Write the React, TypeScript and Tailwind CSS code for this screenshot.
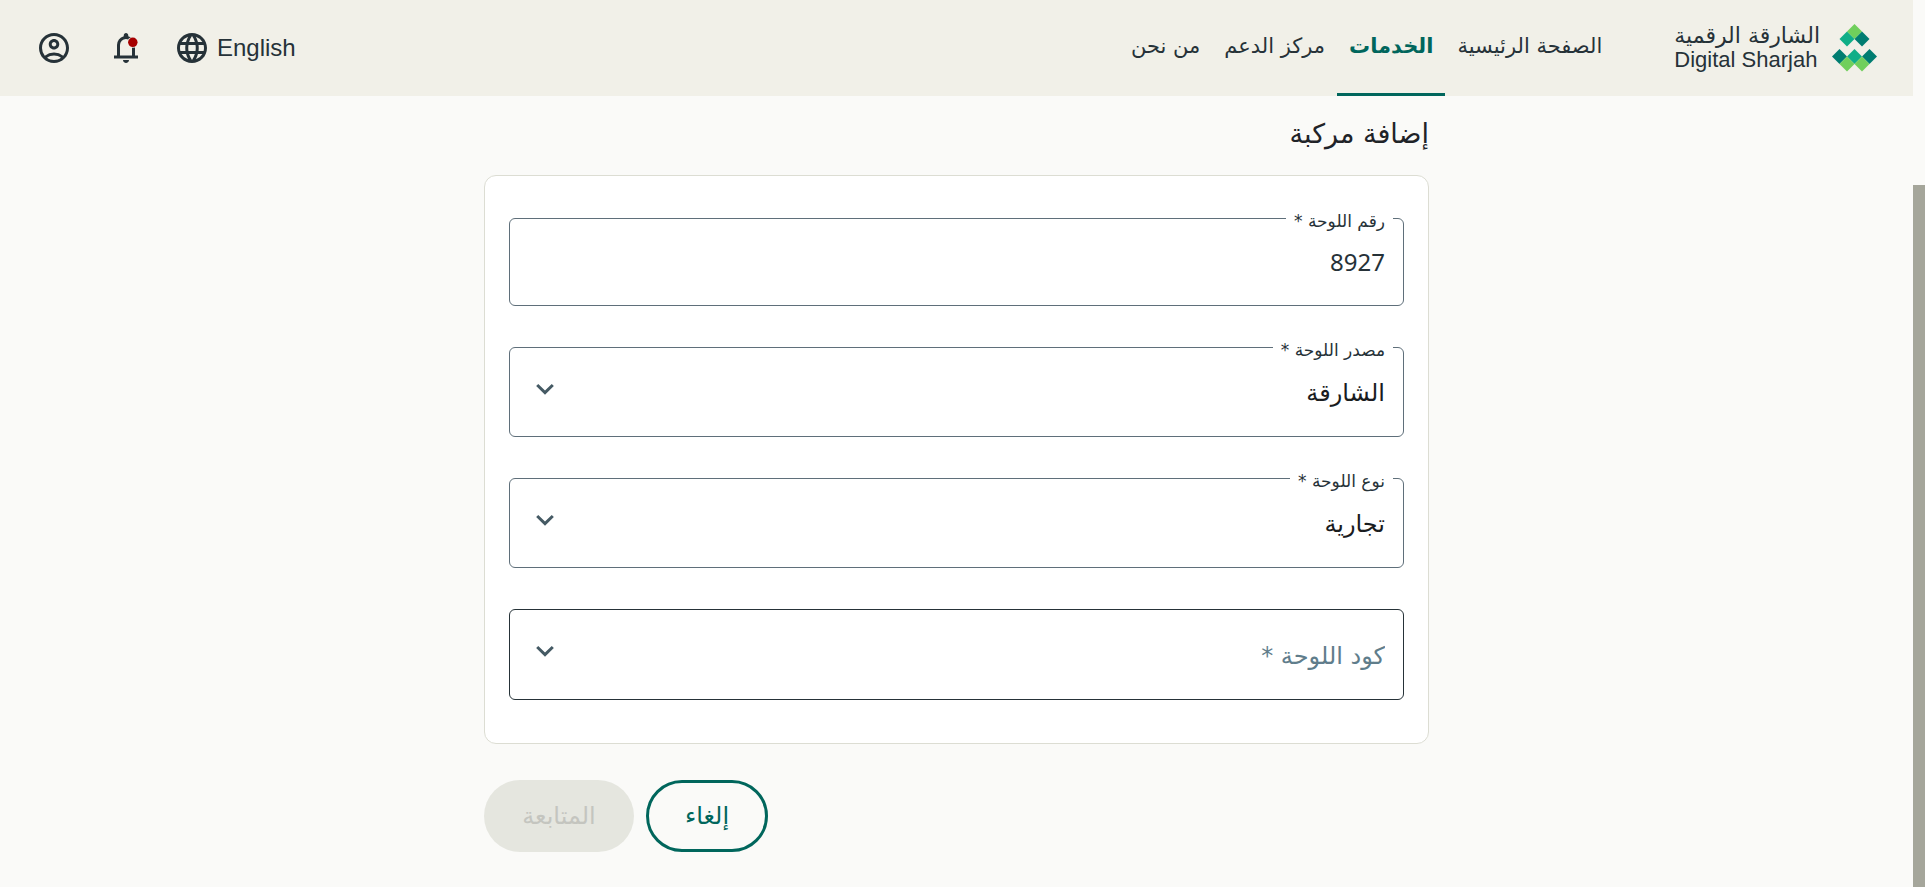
import { type ReactNode } from "react";
import { MdLanguage, MdOutlineAccountCircle } from "react-icons/md";

const navItems = [
  { label: "الصفحة الرئيسية", active: false },
  { label: "الخدمات", active: true },
  { label: "مركز الدعم", active: false },
  { label: "من نحن", active: false },
];

function LogoMark() {
  return (
    <svg viewBox="0 0 45 48" className="h-12 w-[45px]" aria-hidden="true">
      <path d="M22.5 0L30 7.5L22.5 15L15 7.5Z" fill="#70cf5c" />
      <path d="M15 7.5L22.5 15L15 22.5L7.5 15Z" fill="#0fae87" />
      <path d="M30 7.5L37.5 15L30 22.5L22.5 15Z" fill="#007d71" />
      <path d="M7.5 25L15 32.5L7.5 40L0 32.5Z" fill="#007d71" />
      <path d="M22.5 25L30 32.5L22.5 40L15 32.5Z" fill="#0fae87" />
      <path d="M37.5 25L45 32.5L37.5 40L30 32.5Z" fill="#007d71" />
      <path d="M15 32.5L22.5 40L15 47.5L7.5 40Z" fill="#70cf5c" />
      <path d="M30 32.5L37.5 40L30 47.5L22.5 40Z" fill="#70cf5c" />
    </svg>
  );
}

function BellIcon() {
  return (
    <svg viewBox="0 -960 960 960" className="size-9" aria-hidden="true">
      <path
        fill="currentColor"
        d="M160-200v-80h80v-280q0-83 50-147.5T420-792v-28q0-25 17.5-42.5T480-880q25 0 42.5 17.5T540-820v28q80 20 130 84.5T720-560v280h80v80H160Zm320 120q-33 0-56.5-23.5T400-160h160q0 33-23.5 56.5T480-80ZM320-280h320v-280q0-66-47-113t-113-47q-66 0-113 47t-47 113v280Z"
      />
      <circle cx="662" cy="-632" r="146" fill="#f1f0e8" />
      <circle cx="662" cy="-632" r="126" fill="#a60000" />
    </svg>
  );
}

function Chevron() {
  return (
    <svg viewBox="0 0 18 12" className="pointer-events-none absolute top-9 left-[27px] h-3 w-[18px]" fill="none" stroke="#455a64" strokeWidth="3" aria-hidden="true">
      <path d="M1.2 2L9 9.6L16.8 2" />
    </svg>
  );
}

function Field({ id, label, children }: { id: string; label: string; children: ReactNode }) {
  return (
    <div className="relative">
      <label htmlFor={id} className="absolute -top-[9px] right-[11px] bg-white px-2 text-[17px] leading-6 text-[#263238]">
        {label}
      </label>
      {children}
    </div>
  );
}

function SelectField({ id, label, value }: { id: string; label: string; value: string }) {
  return (
    <Field id={id} label={label}>
      <select id={id} className="block h-[90px] w-full appearance-none rounded-md border border-[#5f6f7a] bg-white px-[18px] pt-0.5 text-2xl text-[#1a1c1e]">
        <option>{value}</option>
      </select>
      <Chevron />
    </Field>
  );
}

export default function App() {
  return (
    <div dir="rtl" className="flex min-h-screen bg-[#fafaf8] font-['DejaVu_Sans',sans-serif] text-[#263238]">
      <div className="flex w-3 shrink-0 flex-col pt-[185px]">
        <div className="flex-1 bg-[#a5a69b]" />
      </div>
      <div className="min-w-0 flex-1">
        <header className="flex h-24 items-center justify-between bg-[#f1f0e8] px-9">
          <div className="flex h-full items-center gap-[60px]">
            <a href="#home" className="flex items-center gap-3">
              <LogoMark />
              <span className="flex flex-col">
                <span className="text-[22px] leading-6">الشارقة الرقمية</span>
                <span dir="ltr" className="font-['Liberation_Sans',sans-serif] text-[22px] leading-6">Digital Sharjah</span>
              </span>
            </a>
            <nav className="flex h-full">
              {navItems.map((item) => (
                <a
                  key={item.label}
                  href="#nav"
                  aria-current={item.active ? "page" : undefined}
                  className={
                    item.active
                      ? "flex items-center border-b-[3px] border-[#00665c] px-3 text-[21px] font-bold text-[#00665c]"
                      : "flex items-center px-3 pb-[3px] text-[21px]"
                  }
                >
                  {item.label}
                </a>
              ))}
            </nav>
          </div>
          <div className="flex items-center gap-[30px]">
            <button type="button" dir="ltr" className="flex items-center gap-[7px]">
              <MdLanguage className="size-9" aria-hidden="true" />
              <span className="font-['Liberation_Sans',sans-serif] text-2xl">English</span>
            </button>
            <div className="flex items-center gap-9">
              <button type="button" aria-label="الإشعارات"><BellIcon /></button>
              <button type="button" aria-label="الحساب"><MdOutlineAccountCircle className="size-9" /></button>
            </div>
          </div>
        </header>
        <main className="mx-auto max-w-[945px] pt-5">
          <h1 className="text-[27px] leading-9 font-medium text-[#1f2328]">إضافة مركبة</h1>
          <form className="mt-[23px]">
            <div className="flex flex-col gap-[41px] rounded-xl border border-[#dcddd3] bg-white px-6 pt-[42px] pb-[43px]">
              <Field id="plate-number" label="رقم اللوحة *">
                <input id="plate-number" defaultValue="8927" className="block h-[88px] w-full rounded-md border border-[#5f6f7a] bg-white px-[18px] pb-0.5 font-['Noto_Sans',sans-serif] text-2xl text-[#263238]" />
              </Field>
              <SelectField id="plate-source" label="مصدر اللوحة *" value="الشارقة" />
              <SelectField id="plate-kind" label="نوع اللوحة *" value="تجارية" />
              <div className="relative">
                <select aria-label="كود اللوحة" className="block h-[91px] w-full appearance-none rounded-md border border-[#263238] bg-white px-[18px] pt-0.5 text-2xl text-[#607d8b]">
                  <option>كود اللوحة *</option>
                </select>
                <Chevron />
              </div>
            </div>
            <div className="mt-9 flex justify-end gap-3">
              <button type="button" className="h-[72px] min-w-[122px] rounded-full border-[3px] border-[#00665c] px-8 text-2xl text-[#00665c]">إلغاء</button>
              <button type="submit" disabled className="h-[72px] min-w-[150px] rounded-full bg-[#e5e6df] px-9 text-2xl text-[#c4c5bf]">المتابعة</button>
            </div>
          </form>
        </main>
      </div>
    </div>
  );
}
